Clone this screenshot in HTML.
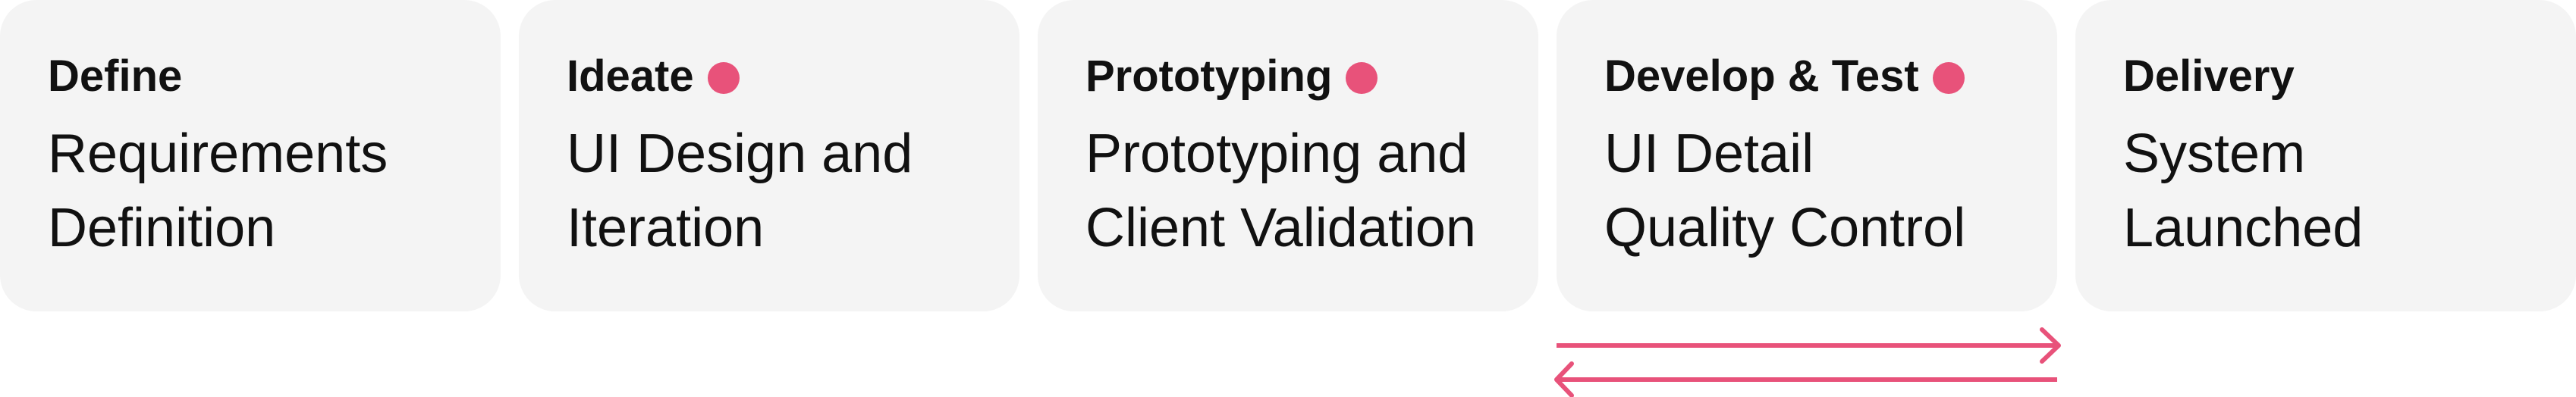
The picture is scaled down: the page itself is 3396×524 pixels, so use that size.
<!DOCTYPE html>
<html><head><meta charset="utf-8"><style>
html,body{margin:0;padding:0;background:#fff;}
body{width:3396px;height:524px;position:relative;overflow:hidden;font-family:"Liberation Sans",sans-serif;color:#111;}
.card{position:absolute;top:0;width:660px;height:411px;background:#f4f4f4;border-radius:48px;}
.t{position:absolute;left:63px;top:61px;font-size:58px;font-weight:bold;line-height:80px;white-space:nowrap;}
.dot{display:inline-block;width:42px;height:42px;border-radius:50%;background:#e8527a;margin-left:18px;vertical-align:-4px;}
.b{position:absolute;left:63px;top:154px;font-size:72px;line-height:98px;white-space:nowrap;}
</style></head><body>
<div class="card" style="left:0"><div class="t">Define</div><div class="b">Requirements<br>Definition</div></div>
<div class="card" style="left:684px"><div class="t">Ideate<span class="dot"></span></div><div class="b">UI Design and<br>Iteration</div></div>
<div class="card" style="left:1368px"><div class="t">Prototyping<span class="dot"></span></div><div class="b">Prototyping and<br>Client Validation</div></div>
<div class="card" style="left:2052px"><div class="t">Develop &amp; Test<span class="dot"></span></div><div class="b">UI Detail<br>Quality Control</div></div>
<div class="card" style="left:2736px"><div class="t">Delivery</div><div class="b">System<br>Launched</div></div>
<svg style="position:absolute;left:0;top:0" width="3396" height="524">
<g stroke="#e8527a" stroke-width="6" fill="none" stroke-linecap="round" stroke-linejoin="round">
<line x1="2052" y1="456" x2="2712" y2="456" stroke-linecap="butt"/>
<polyline points="2692,435 2714,456 2692,477"/>
<line x1="2054" y1="501" x2="2712" y2="501" stroke-linecap="butt"/>
<polyline points="2072,480 2052,501 2072,522"/>
</g></svg>
</body></html>
